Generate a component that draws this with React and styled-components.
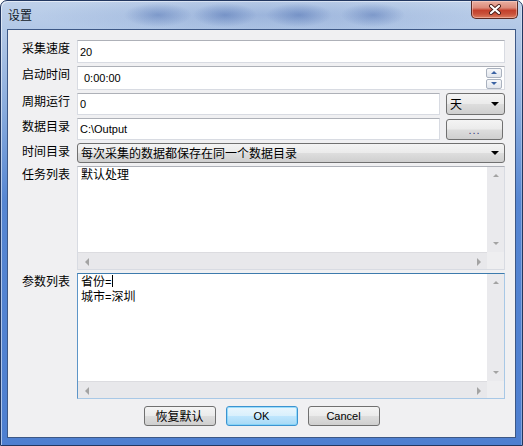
import React from "react"
import styled, { createGlobalStyle } from "styled-components"

const CJK = `"Noto Sans CJK SC", "Liberation Sans", sans-serif`
const LATIN = `"Liberation Sans", "Noto Sans CJK SC", sans-serif`

const GlobalStyle = createGlobalStyle`
    html, body {
        margin: 0;
        padding: 0;
        background: #ffffff;
    }
    body {
        font-family: ${LATIN};
    }
`

const Window = styled.div`
    width: 523px;
    height: 446px;
    box-sizing: border-box;
    display: flex;
    flex-direction: column;
    overflow: hidden;
    border: 1px solid #223760;
    border-radius: 7px 7px 0 0;
    background: linear-gradient(
        180deg,
        #bfd1ea 0px,
        #adc4e5 40px,
        #88abdd 110px,
        #5686d2 200px,
        #4e7fd0 100%
    );
    box-shadow: inset 1px 1px 0 rgba(255, 255, 255, 0.55),
        inset -1px 0 0 rgba(255, 255, 255, 0.3);
`

const TitleBar = styled.div`
    height: 28px;
    flex: none;
    display: flex;
    align-items: flex-start;
    justify-content: space-between;
    background: radial-gradient(ellipse 34px 12px at 157px 14px, rgba(60, 96, 168, 0.4), transparent),
        radial-gradient(ellipse 32px 12px at 224px 14px, rgba(60, 96, 168, 0.42), transparent),
        radial-gradient(ellipse 33px 12px at 298px 14px, rgba(60, 96, 168, 0.42), transparent),
        radial-gradient(ellipse 32px 12px at 372px 14px, rgba(60, 96, 168, 0.4), transparent),
        radial-gradient(ellipse 230px 20px at 265px 14px, rgba(90, 125, 190, 0.3), transparent);
`

const Title = styled.span`
    padding: 7px 0 0 7px;
    font-family: ${CJK};
    font-size: 12px;
    line-height: 14px;
    color: #111a2a;
`

const CloseButton = styled.div`
    width: 47px;
    height: 18px;
    margin-right: 4px;
    box-sizing: border-box;
    display: flex;
    align-items: center;
    justify-content: center;
    border: 1px solid #5a2a24;
    border-top: none;
    border-radius: 0 0 5px 5px;
    background: linear-gradient(
        180deg,
        #eab0a2 0%,
        #dc8a7a 40%,
        #c4402c 55%,
        #c8503a 75%,
        #dc7c60 100%
    );
    box-shadow: inset 0 0 0 1px rgba(255, 220, 210, 0.45);
`

const Client = styled.div`
    flex: 1;
    margin: 0 6px 7px 6px;
    padding: 10px 10px 0 0;
    display: flex;
    flex-direction: column;
    border: 1px solid #3d5886;
    background: #f0f0f2;
`

const Form = styled.div`
    display: flex;
    flex-direction: column;
    gap: 3px;
`

const Row = styled.div`
    display: grid;
    grid-template-columns: 62px 1fr;
    column-gap: 7px;
    height: ${(p) => p.$h}px;
`

const Label = styled.span`
    align-self: start;
    padding-top: 1px;
    text-align: right;
    font-family: ${CJK};
    font-size: 12px;
    line-height: 14px;
    color: #000;
    white-space: nowrap;
`

const Line = styled.div`
    display: flex;
    gap: 6px;
    min-width: 0;
`

const Field = styled.div`
    flex: 1;
    box-sizing: border-box;
    display: flex;
    align-items: center;
    justify-content: space-between;
    padding: 0 2px 0 ${(p) => p.$indent || 2}px;
    border: 1px solid #d8dbe2;
    border-top-color: #aeb1b8;
    background: #fff;
    font-family: ${LATIN};
    font-size: 11px;
    color: #000;
`

const SpinColumn = styled.div`
    display: flex;
    flex-direction: column;
    gap: 1px;
`

const SpinButton = styled.div`
    width: 16px;
    height: 10px;
    box-sizing: border-box;
    display: flex;
    align-items: center;
    justify-content: center;
    border: 1px solid #aab2bf;
    border-radius: 2px;
    background: linear-gradient(180deg, #f7f8fa, #e1e5ec);
`

const Tri = styled.span`
    width: 0;
    height: 0;
    border-left: ${(p) => p.$w || 3}px solid transparent;
    border-right: ${(p) => p.$w || 3}px solid transparent;
    ${(p) => (p.$up ? "border-bottom" : "border-top")}: ${(p) => p.$h || 3}px solid
        ${(p) => p.$color || "#3b62a3"};
`

const SideTri = styled.span`
    width: 0;
    height: 0;
    border-top: 4px solid transparent;
    border-bottom: 4px solid transparent;
    ${(p) => (p.$left ? "border-right" : "border-left")}: 4px solid #a3a3a3;
`

const Combo = styled.div`
    box-sizing: border-box;
    ${(p) => (p.$w ? `width: ${p.$w}px; flex: none;` : "flex: 1;")}
    display: flex;
    align-items: center;
    justify-content: space-between;
    padding: 0 5px 0 3px;
    border: 1px solid #707070;
    border-radius: 3px;
    background: linear-gradient(180deg, #f4f4f4 0%, #ebebeb 48%, #dddddd 52%, #cfcfcf 100%);
    font-family: ${CJK};
    font-size: 12px;
    line-height: 14px;
    color: #000;
`

const DotsButton = styled.div`
    width: 57px;
    height: 21px;
    margin: 1px 2px 0 0;
    box-sizing: border-box;
    display: flex;
    align-items: center;
    justify-content: center;
    border: 1px solid #707070;
    border-radius: 3px;
    background: linear-gradient(180deg, #f4f4f4 0%, #ebebeb 48%, #dddddd 52%, #cfcfcf 100%);
    font-family: ${LATIN};
    font-size: 11px;
    color: #3a3a7a;
    letter-spacing: 1px;
`

const Memo = styled.div`
    box-sizing: border-box;
    display: grid;
    grid-template-columns: 1fr 17px;
    grid-template-rows: 1fr 17px;
    min-height: 0;
    border: 1px solid ${(p) => (p.$focus ? "#a8c8e6" : "#d8dbe2")};
    border-top-color: ${(p) => (p.$focus ? "#3d7bad" : "#aeb1b8")};
    ${(p) => p.$focus && "border-left-color: #5d95c8;"}
    background: #fff;
`

const MemoText = styled.div`
    padding: 0 3px;
    font-family: ${CJK};
    font-size: 12px;
    line-height: 14px;
    color: #000;
`

const Eq = styled.span`
    font-family: ${LATIN};
    font-size: 11px;
`

const Caret = styled.span`
    display: inline-block;
    width: 1px;
    height: 12px;
    margin-left: 1px;
    vertical-align: -1px;
    background: #000;
`

const VBar = styled.div`
    display: flex;
    flex-direction: column;
    justify-content: space-between;
    background: #eaeaed;
`

const HBar = styled.div`
    display: flex;
    justify-content: space-between;
    background: #e8e8eb;
    border-top: 1px solid #dcdce0;
`

const BarButton = styled.div`
    width: 17px;
    height: 17px;
    display: flex;
    align-items: center;
    justify-content: center;
`

const Corner = styled.div`
    background: #eeeef0;
`

const ButtonRow = styled.div`
    display: flex;
    justify-content: center;
    gap: 10px;
    margin-top: 7px;
    padding-left: 10px;
`

const PushButton = styled.div`
    width: 72px;
    height: 20px;
    box-sizing: border-box;
    display: flex;
    align-items: center;
    justify-content: center;
    border: 1px solid ${(p) => (p.$default ? "#3c93d0" : "#707070")};
    border-radius: 3px;
    background: ${(p) =>
        p.$default
            ? "linear-gradient(180deg, #eaf6fd 0%, #d9f0fc 48%, #bee6fd 52%, #a7d9f5 100%)"
            : "linear-gradient(180deg, #f4f4f4 0%, #ebebeb 48%, #dddddd 52%, #cfcfcf 100%)"};
    box-shadow: ${(p) => (p.$default ? "inset 0 0 0 1px rgba(120, 210, 250, 0.7)" : "none")};
    font-family: ${(p) => (p.$cjk ? CJK : LATIN)};
    font-size: ${(p) => (p.$cjk ? 12 : 11)}px;
    line-height: 14px;
    color: #000;
`

const ScrollMemo = ({ focus, children }) => (
    <Memo $focus={focus}>
        <MemoText>{children}</MemoText>
        <VBar>
            <BarButton>
                <Tri $up $w={3} $h={3} $color="#a3a3a3" />
            </BarButton>
            <BarButton>
                <Tri $w={3} $h={3} $color="#a3a3a3" />
            </BarButton>
        </VBar>
        <HBar>
            <BarButton>
                <SideTri $left />
            </BarButton>
            <BarButton>
                <SideTri />
            </BarButton>
        </HBar>
        <Corner />
    </Memo>
)

const CloseGlyph = () => (
    <svg width="14" height="11" viewBox="0 0 14 11">
        <path d="M3 2 L11 9 M11 2 L3 9" stroke="#4a1e1a" strokeWidth="4" strokeLinecap="round" />
        <path d="M3 2 L11 9 M11 2 L3 9" stroke="#ffffff" strokeWidth="2.2" strokeLinecap="round" />
    </svg>
)

const App = () => {
    return (
        <>
            <GlobalStyle />
            <Window>
                <TitleBar>
                    <Title>设置</Title>
                    <CloseButton>
                        <CloseGlyph />
                    </CloseButton>
                </TitleBar>
                <Client>
                    <Form>
                        <Row $h={23}>
                            <Label>采集速度</Label>
                            <Field>20</Field>
                        </Row>
                        <Row $h={24}>
                            <Label>启动时间</Label>
                            <Field $indent={6}>
                                <span>0:00:00</span>
                                <SpinColumn>
                                    <SpinButton>
                                        <Tri $up />
                                    </SpinButton>
                                    <SpinButton>
                                        <Tri />
                                    </SpinButton>
                                </SpinColumn>
                            </Field>
                        </Row>
                        <Row $h={22}>
                            <Label>周期运行</Label>
                            <Line>
                                <Field>0</Field>
                                <Combo $w={59}>
                                    <span>天</span>
                                    <Tri $w={4} $h={4} $color="#000" />
                                </Combo>
                            </Line>
                        </Row>
                        <Row $h={22}>
                            <Label>数据目录</Label>
                            <Line>
                                <Field>C:\Output</Field>
                                <DotsButton>...</DotsButton>
                            </Line>
                        </Row>
                        <Row $h={20}>
                            <Label>时间目录</Label>
                            <Combo>
                                <span>每次采集的数据都保存在同一个数据目录</span>
                                <Tri $w={4} $h={4} $color="#000" />
                            </Combo>
                        </Row>
                        <Row $h={104}>
                            <Label>任务列表</Label>
                            <ScrollMemo>默认处理</ScrollMemo>
                        </Row>
                        <Row $h={126}>
                            <Label>参数列表</Label>
                            <ScrollMemo focus>
                                <div>
                                    省份<Eq>=</Eq>
                                    <Caret />
                                </div>
                                <div>
                                    城市<Eq>=</Eq>深圳
                                </div>
                            </ScrollMemo>
                        </Row>
                    </Form>
                    <ButtonRow>
                        <PushButton $cjk>恢复默认</PushButton>
                        <PushButton $default>OK</PushButton>
                        <PushButton>Cancel</PushButton>
                    </ButtonRow>
                </Client>
            </Window>
        </>
    )
}

export default App
